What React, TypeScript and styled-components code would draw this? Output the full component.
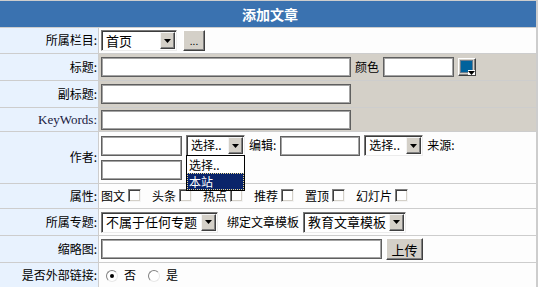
import styled, { createGlobalStyle } from 'styled-components'

const GlobalStyle = createGlobalStyle`
  body {
    margin: 0;
    background: #ffffff;
    font-family: 'Noto Sans CJK SC', 'Liberation Sans', sans-serif;
    font-size: 12px;
    line-height: 1.2;
    color: #000;
  }
`

const Sheet = styled.div`
  width: 538px;
  box-sizing: border-box;
  background: #cdcdcd;
  padding: 1px 2px 0 0;
  display: flex;
  flex-direction: column;
  gap: 1px;
`

const Header = styled.div`
  height: 26px;
  background: #3a72b0;
  color: #fff;
  font-weight: bold;
  font-size: 14px;
  display: flex;
  align-items: center;
  justify-content: center;
  padding-left: 4px;
`

const Row = styled.div<{ $h: number }>`
  display: grid;
  grid-template-columns: 98px 1fr;
  column-gap: 1px;
  height: ${(p) => p.$h}px;
`

const Label = styled.div<{ $latin?: boolean }>`
  background: #e8f2fe;
  display: flex;
  align-items: center;
  justify-content: flex-end;
  padding-right: 1px;
  font-family: ${(p) =>
    p.$latin ? "'Liberation Serif', serif" : "'Noto Sans CJK SC', sans-serif"};
  font-size: ${(p) => (p.$latin ? '13px' : '12px')};
  color: ${(p) => (p.$latin ? '#1a1a40' : '#000')};
`

const Value = styled.div<{ $grey?: boolean; $gap?: number }>`
  background: ${(p) => (p.$grey ? '#d4d0c8' : '#fdfdfd')};
  display: flex;
  align-items: center;
  padding-left: 2px;
  gap: ${(p) => p.$gap ?? 4}px;
`

const Stack = styled.div`
  background: #fdfdfd;
  display: flex;
  flex-direction: column;
  justify-content: center;
  padding-left: 2px;
  gap: 4px;
`

const Line = styled.div`
  display: flex;
  align-items: center;
  gap: 4px;
`

const Field = styled.input<{ $w: number }>`
  box-sizing: border-box;
  width: ${(p) => p.$w}px;
  height: 20px;
  margin: 0;
  padding: 0 2px;
  background: #fff;
  border: 1px solid #5f5f5f;
  box-shadow: inset 1px 1px 0 #a4a4a4, inset -1px -1px 0 #a4a4a4;
  font: inherit;
  outline: none;
`

const SelectBox = styled.div<{ $w: number }>`
  position: relative;
  box-sizing: border-box;
  width: ${(p) => p.$w}px;
  height: 21px;
  display: flex;
  align-items: stretch;
  background: #fff;
  border: 1px solid;
  border-color: #7a7a7a #ececec #ececec #7a7a7a;
  box-shadow: inset 1px 1px 0 #3c3c3c;
  padding: 1px;
`

const SelectText = styled.span<{ $big?: boolean }>`
  flex: 1;
  display: flex;
  align-items: center;
  padding-left: 3px;
  font-size: ${(p) => (p.$big ? '13px' : '12px')};
  white-space: nowrap;
  overflow: hidden;
`

const ArrowBtn = styled.span`
  width: 15px;
  box-sizing: border-box;
  background: #d4d0c8;
  border: 1px solid;
  border-color: #f4f4f4 #404040 #404040 #f4f4f4;
  box-shadow: inset -1px -1px 0 #808080;
  display: flex;
  align-items: center;
  justify-content: center;
`

const DropList = styled.div`
  position: absolute;
  top: 100%;
  left: -1px;
  width: 59px;
  box-sizing: border-box;
  background: #fff;
  border: 1px solid #000;
  z-index: 5;
`

const DropItem = styled.div<{ $active?: boolean }>`
  height: 17px;
  line-height: 17px;
  padding-left: 2px;
  font-size: 12px;
  background: ${(p) => (p.$active ? '#0a246a' : '#fff')};
  color: ${(p) => (p.$active ? '#fff' : '#000')};
  outline: ${(p) => (p.$active ? '1px dotted #e8d890' : 'none')};
  outline-offset: -1px;
`

const Raised = styled.button<{ $w: number; $h: number; $fs?: number }>`
  box-sizing: border-box;
  width: ${(p) => p.$w}px;
  height: ${(p) => p.$h}px;
  margin: 0;
  padding: 0;
  background: #d4d0c8;
  border: 1px solid;
  border-color: #ffffff #404040 #404040 #ffffff;
  box-shadow: inset -1px -1px 0 #808080;
  font-family: 'Noto Sans CJK SC', sans-serif;
  font-size: ${(p) => p.$fs ?? 12}px;
  color: #000;
  display: flex;
  align-items: center;
  justify-content: center;
`

const Swatch = styled.span`
  position: relative;
  width: 11px;
  height: 11px;
  background: #00629c;
  border: 1px solid #6a7c8e;
  margin: -1px 1px 0 0;
`

const SwatchArrow = styled.span`
  position: absolute;
  right: -3px;
  bottom: -3px;
  width: 7px;
  height: 5px;
  background: #fff;
  display: flex;
  align-items: center;
  justify-content: center;
`

const Text = styled.span<{ $ml?: number }>`
  white-space: nowrap;
  margin-left: ${(p) => p.$ml ?? 0}px;
`

const Check = styled.span<{ $mr?: number }>`
  display: inline-block;
  box-sizing: border-box;
  width: 13px;
  height: 13px;
  background: #fff;
  border: 1px solid;
  border-color: #808080 #f4f4f4 #f4f4f4 #808080;
  box-shadow: inset 1px 1px 0 #404040, inset -1px -1px 0 #d4d0c8;
  margin-right: ${(p) => p.$mr ?? 9}px;
`

const Radio = styled.span<{ $on?: boolean; $ml?: number }>`
  position: relative;
  display: inline-block;
  box-sizing: border-box;
  width: 12px;
  height: 12px;
  border-radius: 50%;
  background: #fff;
  border: 1px solid;
  border-color: #808080 #e8e8e8 #e8e8e8 #808080;
  margin-left: ${(p) => p.$ml ?? 0}px;
  &::after {
    content: '';
    display: ${(p) => (p.$on ? 'block' : 'none')};
    position: absolute;
    left: 3px;
    top: 3px;
    width: 4px;
    height: 4px;
    border-radius: 50%;
    background: #000;
  }
`

const Caret = () => (
  <svg width="7" height="4" viewBox="0 0 7 4">
    <path d="M0 0h7L3.5 4z" fill="#000" />
  </svg>
)

const Select = ({
  w,
  text,
  big,
  children,
}: {
  w: number
  text: string
  big?: boolean
  children?: React.ReactNode
}) => (
  <SelectBox $w={w}>
    <SelectText $big={big}>{text}</SelectText>
    <ArrowBtn>
      <Caret />
    </ArrowBtn>
    {children}
  </SelectBox>
)

const attrs = ['图文', '头条', '热点', '推荐', '置顶', '幻灯片']

export default function App() {
  return (
    <>
      <GlobalStyle />
      <Sheet>
        <Header>添加文章</Header>

        <Row $h={25}>
          <Label>所属栏目:</Label>
          <Value $gap={6}>
            <Select w={76} text="首页" big />
            <Raised $w={22} $h={21} $fs={10}>
              ...
            </Raised>
          </Value>
        </Row>

        <Row $h={26}>
          <Label>标题:</Label>
          <Value $grey>
            <Field $w={250} />
            <Text>颜色</Text>
            <Field $w={71} />
            <Raised $w={18} $h={18}>
              <Swatch>
                <SwatchArrow>
                  <Caret />
                </SwatchArrow>
              </Swatch>
            </Raised>
          </Value>
        </Row>

        <Row $h={26}>
          <Label>副标题:</Label>
          <Value $grey>
            <Field $w={250} />
          </Value>
        </Row>

        <Row $h={23}>
          <Label $latin>KeyWords:</Label>
          <Value $grey>
            <Field $w={250} />
          </Value>
        </Row>

        <Row $h={51}>
          <Label>作者:</Label>
          <Stack>
            <Line>
              <Field $w={81} />
              <Select w={59} text="选择..">
                <DropList>
                  <DropItem>选择..</DropItem>
                  <DropItem $active>本站</DropItem>
                </DropList>
              </Select>
              <Text>编辑:</Text>
              <Field $w={80} />
              <Select w={59} text="选择.." />
              <Text>来源:</Text>
            </Line>
            <Line>
              <Field $w={81} />
            </Line>
          </Stack>
        </Row>

        <Row $h={24}>
          <Label>属性:</Label>
          <Value $gap={3}>
            {attrs.map((a) => (
              <Line key={a} style={{ gap: 3 }}>
                <Text>{a}</Text>
                <Check $mr={a === '幻灯片' ? 0 : 8} />
              </Line>
            ))}
          </Value>
        </Row>

        <Row $h={26}>
          <Label>所属专题:</Label>
          <Value>
            <Select w={117} text="不属于任何专题" big />
            <Text $ml={5}>绑定文章模板</Text>
            <Select w={103} text="教育文章模板" big />
          </Value>
        </Row>

        <Row $h={26}>
          <Label>缩略图:</Label>
          <Value>
            <Field $w={281} />
            <Raised $w={37} $h={22} $fs={13}>
              上传
            </Raised>
          </Value>
        </Row>

        <Row $h={25}>
          <Label>是否外部链接:</Label>
          <Value $gap={6}>
            <Radio $on $ml={5} />
            <Text>否</Text>
            <Radio $ml={6} />
            <Text>是</Text>
          </Value>
        </Row>
      </Sheet>
    </>
  )
}
